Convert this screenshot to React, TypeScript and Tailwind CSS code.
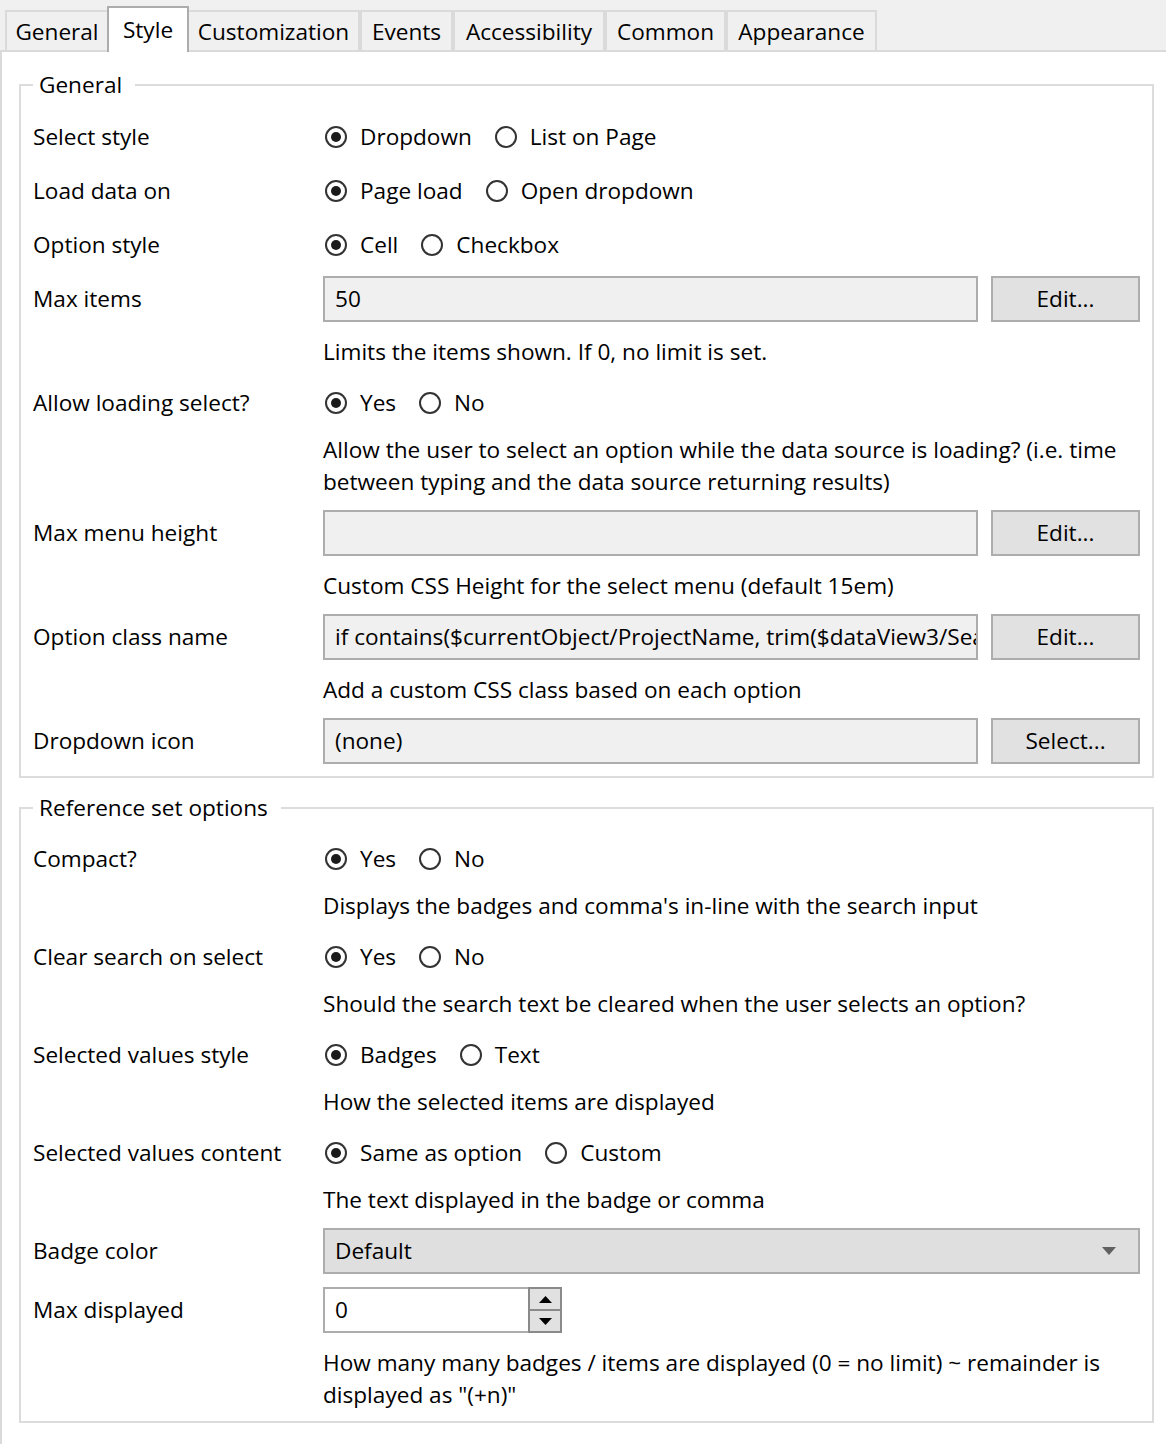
import React, { ReactNode } from "react";

type Option = { label: string; checked?: boolean };

const tabs = [
  { label: "General", width: "w-[104px]" },
  { label: "Style", width: "w-[82px]", active: true },
  { label: "Customization", width: "w-[173px]" },
  { label: "Events", width: "w-[93px]" },
  { label: "Accessibility", width: "w-[152px]" },
  { label: "Common", width: "w-[121px]" },
  { label: "Appearance", width: "w-[151px]" },
];

function Radio({ label, checked }: Option) {
  return (
    <span className="flex items-center gap-[13px]">
      <span className="flex h-[22px] w-[22px] items-center justify-center rounded-full border-2 border-[#333333] bg-white">
        {checked && <span className="h-[10px] w-[10px] rounded-full bg-[#1b1b1b]" />}
      </span>
      <span>{label}</span>
    </span>
  );
}

function RadioGroup({ options }: { options: Option[] }) {
  return (
    <div className="ml-[2px] flex items-center gap-[23px]">
      {options.map((o) => (
        <Radio key={o.label} {...o} />
      ))}
    </div>
  );
}

/**
 * One property row: label on the left, control on the right, optional hint below.
 */
function Field({
  label,
  children,
  hint,
  hintClass = "mt-2",
  className = "",
}: {
  label: string;
  children: ReactNode;
  hint?: ReactNode;
  hintClass?: string;
  className?: string;
}) {
  return (
    <div className={`grid grid-cols-[290px_minmax(0,1fr)] ${className}`}>
      <div className="flex h-[46px] items-center">{label}</div>
      <div className="flex h-[46px] min-w-0 items-center">{children}</div>
      {hint && <div className={`col-start-2 mb-1 leading-8 ${hintClass}`}>{hint}</div>}
    </div>
  );
}

function TextWithButton({ value, action }: { value: string; action: string }) {
  return (
    <div className="flex w-full min-w-0 items-center gap-[13px]">
      <div className="flex h-[46px] min-w-0 flex-1 items-center overflow-hidden whitespace-nowrap border-2 border-[#adadad] bg-[#f0f0f0] pl-[10px]">
        {value}
      </div>
      <button className="h-[46px] w-[149px] shrink-0 border-2 border-[#adadad] bg-[#e1e1e1]">
        {action}
      </button>
    </div>
  );
}

function GroupBox({
  title,
  children,
  className = "",
}: {
  title: string;
  children: ReactNode;
  className?: string;
}) {
  return (
    <fieldset className={`min-w-0 border-2 border-[#dcdcdc] px-[12px] ${className}`}>
      <legend className="pl-[6px] pr-[13px] leading-8">{title}</legend>
      <div className="flex flex-col gap-2">{children}</div>
    </fieldset>
  );
}

export default function App() {
  return (
    <div className="min-h-[1444px] bg-[#f0f0f0] font-['Open_Sans',sans-serif] text-[22.6px] text-black">
      {/* Tab strip */}
      <div className="flex h-[50px] items-end pl-[5px]">
        {tabs.map((t) =>
          t.active ? (
            <div
              key={t.label}
              className={`relative z-10 -mx-[2px] -mb-[2px] flex h-[46px] items-center justify-center border-2 border-b-0 border-[#acacac] bg-white ${t.width}`}
            >
              {t.label}
            </div>
          ) : (
            <div
              key={t.label}
              className={`flex h-[40px] items-center justify-center border-2 border-b-0 border-[#dadada] bg-[#f0f0f0] pt-[2px] ${t.width}`}
            >
              {t.label}
            </div>
          )
        )}
      </div>

      {/* Panel */}
      <div className="min-h-[1394px] border-l-2 border-t-2 border-[#dadada] bg-white pl-[17px] pr-[12px] pt-[17px]">
        <GroupBox title="General" className="pb-[12px] pt-[13px]">
          <Field label="Select style">
            <RadioGroup options={[{ label: "Dropdown", checked: true }, { label: "List on Page" }]} />
          </Field>
          <Field label="Load data on">
            <RadioGroup options={[{ label: "Page load", checked: true }, { label: "Open dropdown" }]} />
          </Field>
          <Field label="Option style">
            <RadioGroup options={[{ label: "Cell", checked: true }, { label: "Checkbox" }]} />
          </Field>
          <Field
            label="Max items"
            hint="Limits the items shown. If 0, no limit is set."
            hintClass="mt-[14px]"
          >
            <TextWithButton value="50" action="Edit..." />
          </Field>
          <Field
            label="Allow loading select?"
            hint={
              <span className="whitespace-nowrap">
                Allow the user to select an option while the data source is loading? (i.e. time
                <br />
                between typing and the data source returning results)
              </span>
            }
          >
            <RadioGroup options={[{ label: "Yes", checked: true }, { label: "No" }]} />
          </Field>
          <Field
            label="Max menu height"
            hint="Custom CSS Height for the select menu (default 15em)"
            hintClass="mt-[14px]"
          >
            <TextWithButton value="" action="Edit..." />
          </Field>
          <Field
            label="Option class name"
            hint="Add a custom CSS class based on each option"
            hintClass="mt-[14px]"
          >
            <TextWithButton
              value="if contains($currentObject/ProjectName, trim($dataView3/SearchText)) then 'selected' else ''"
              action="Edit..."
            />
          </Field>
          <Field label="Dropdown icon">
            <TextWithButton value="(none)" action="Select..." />
          </Field>
        </GroupBox>

        <GroupBox title="Reference set options" className="mt-[14px] pb-[6px] pt-[12px]">
          <Field
            label="Compact?"
            hint="Displays the badges and comma's in-line with the search input"
          >
            <RadioGroup options={[{ label: "Yes", checked: true }, { label: "No" }]} />
          </Field>
          <Field
            label="Clear search on select"
            hint="Should the search text be cleared when the user selects an option?"
          >
            <RadioGroup options={[{ label: "Yes", checked: true }, { label: "No" }]} />
          </Field>
          <Field label="Selected values style" hint="How the selected items are displayed">
            <RadioGroup options={[{ label: "Badges", checked: true }, { label: "Text" }]} />
          </Field>
          <Field label="Selected values content" hint="The text displayed in the badge or comma">
            <RadioGroup options={[{ label: "Same as option", checked: true }, { label: "Custom" }]} />
          </Field>
          <Field label="Badge color">
            <div className="flex h-[46px] w-full items-center justify-between border-2 border-[#adadad] bg-[#dfdfdf] pl-[10px] pr-[22px]">
              <span>Default</span>
              <svg width="14" height="8" viewBox="0 0 14 8">
                <path d="M0 0h14L7 8z" fill="#606060" />
              </svg>
            </div>
          </Field>
          <Field
            label="Max displayed"
            className="mt-[5px]"
            hintClass="mt-[14px]"
            hint={
              <span className="whitespace-nowrap">
                How many many badges / items are displayed (0 = no limit) ~ remainder is
                <br />
                displayed as "(+n)"
              </span>
            }
          >
            <div className="flex h-[46px] w-[239px]">
              <div className="flex flex-1 items-center border-2 border-r-0 border-[#adadad] bg-white pl-[10px]">
                0
              </div>
              <div className="flex w-[34px] flex-col border-2 border-[#8a8a8a]">
                <button className="flex flex-1 items-center justify-center border-b-2 border-[#8a8a8a] bg-[#e1e1e1]">
                  <svg width="13" height="7" viewBox="0 0 13 7">
                    <path d="M6.5 0L13 7H0z" fill="#000" />
                  </svg>
                </button>
                <button className="flex flex-1 items-center justify-center bg-[#e1e1e1]">
                  <svg width="13" height="7" viewBox="0 0 13 7">
                    <path d="M0 0h13L6.5 7z" fill="#000" />
                  </svg>
                </button>
              </div>
            </div>
          </Field>
        </GroupBox>
      </div>
    </div>
  );
}
